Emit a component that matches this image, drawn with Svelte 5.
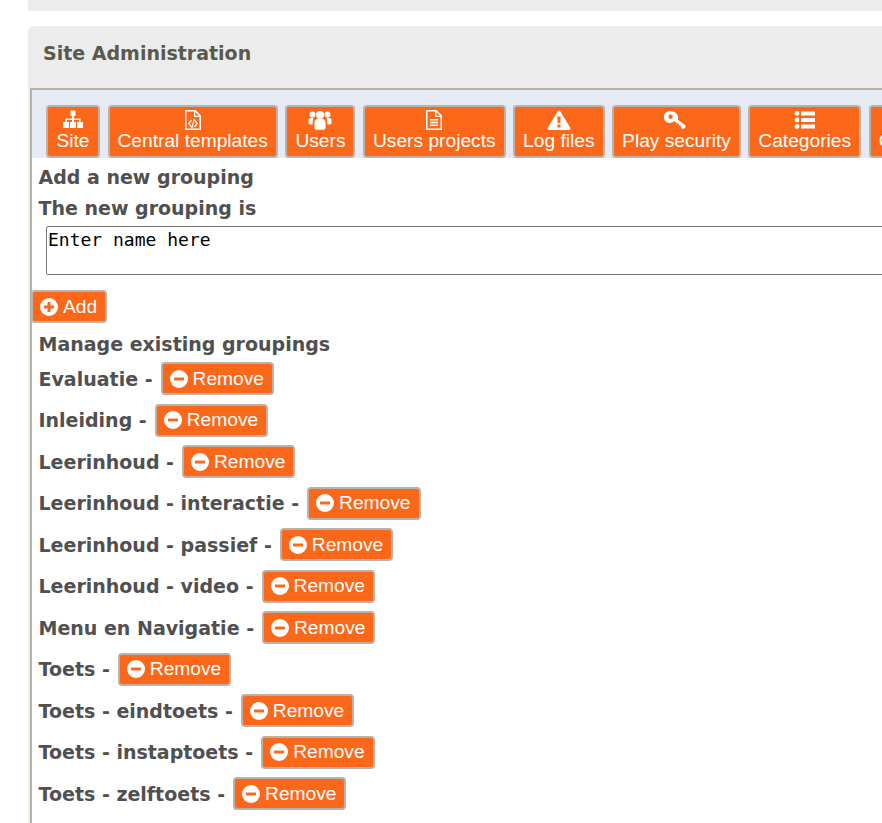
<script>
  const tabs = [
    { label: 'Site', icon: 'sitemap' },
    { label: 'Central templates', icon: 'code' },
    { label: 'Users', icon: 'users' },
    { label: 'Users projects', icon: 'file' },
    { label: 'Log files', icon: 'warning' },
    { label: 'Play security', icon: 'key' },
    { label: 'Categories', icon: 'list' },
    { label: 'Groupings', icon: 'list' }
  ];

  const groupings = [
    'Evaluatie',
    'Inleiding',
    'Leerinhoud',
    'Leerinhoud - interactie',
    'Leerinhoud - passief',
    'Leerinhoud - video',
    'Menu en Navigatie',
    'Toets',
    'Toets - eindtoets',
    'Toets - instaptoets',
    'Toets - zelftoets'
  ];
</script>

<div class="page">
  <div class="topbar"></div>

  <section class="panel">
    <h2 class="panel-title">Site Administration</h2>

    <div class="panel-body">
      <nav class="tabs">
        {#each tabs as tab}
          <button class="btn tab">
            <svg class="tab-icon" viewBox="0 0 24 20" fill="#fff">
              {#if tab.icon === 'sitemap'}
                <path d="M9.500 0.500h5v5.500h-1.500v2.500h6.500V12h2.500v6h-6v-6h2v-2h-5v2h2v6h-6v-6h2v-2h-5v2h2v6h-6v-6h2.500V8.500H11V6H9.500z" />
              {:else if tab.icon === 'code'}
                <path fill-rule="evenodd" d="M4 0h10.500L20 5.500V20H4zM5.500 1.500v17h13V7h-5.500V1.500zM14.300 2v3.700H18z" />
                <path d="M10 9.500l1 1-2.300 3 2.300 3-1 1-3-4zM14 9.500l3 4-3 4-1-1 2.300-3-2.300-3zM12.500 8.800l1.100.2-2.100 9.500-1.100-.2z" />
              {:else if tab.icon === 'users'}
                <circle cx="12" cy="5" r="4" />
                <circle cx="4.500" cy="4.500" r="3" />
                <circle cx="19.500" cy="4.500" r="3" />
                <path d="M6.500 12.500c0-2.300 1.500-3.500 3-3.500h5c1.500 0 3 1.200 3 3.500V17.500c0 1.300-1 2.300-2.300 2.300H8.800c-1.300 0-2.300-1-2.300-2.300z" />
                <path d="M0.500 10c0-1.200 1-2 2.200-2h3.100c-.8.900-1.100 2.300-1.100 3.800v2.700H2.200C1.200 14.500.5 13.800.5 12.800zM23.500 10c0-1.200-1-2-2.200-2h-3.100c.8.900 1.100 2.300 1.100 3.800v2.700h2.500c1 0 1.700-.7 1.700-1.700z" />
              {:else if tab.icon === 'file'}
                <path fill-rule="evenodd" d="M4 0h10.500L20 5.500V20H4zM5.500 1.500v17h13V7h-5.500V1.500zM14.300 2v3.700H18z" />
                <path d="M8 9h8v1.500H8zM8 11.700h8v1.500H8zM8 14.400h8v1.500H8z" />
              {:else if tab.icon === 'warning'}
                <path fill-rule="evenodd" d="M12 0.500c.6 0 1.100.3 1.400.9l9.800 16.400c.6 1-.1 2.200-1.200 2.200H2c-1.100 0-1.800-1.200-1.200-2.200L10.600 1.400c.3-.6.800-.9 1.400-.9zM10.300 6.500l.4 6.500h2.600l.4-6.500zM10.500 14.500v3h3v-3z" />
              {:else if tab.icon === 'key'}
                <path fill-rule="evenodd" d="M8 1.500a6 6 0 0 1 5.700 7.900l7.800 6.100v1.800l-1.800 1.500h-1.400l-1.500-1.500.2-1.600-1.800-.2-.2-1.800-1.800-.2-3-2.400A6 6 0 1 1 8 1.500zM6.500 4.500a2.200 2.200 0 1 0 0 4.400 2.200 2.200 0 0 0 0-4.400z" />
              {:else}
                <circle cx="4" cy="3.500" r="2.400" />
                <circle cx="4" cy="10" r="2.400" />
                <circle cx="4" cy="16.500" r="2.400" />
                <path d="M8 1.500h14v4H8zM8 8h14v4H8zM8 14.500h14v4H8z" />
              {/if}
            </svg>
            <span>{tab.label}</span>
          </button>
        {/each}
      </nav>

      <div class="content">
        <div class="label first">Add a new grouping</div>
        <div class="label second">The new grouping is</div>
        <textarea class="name-input" value="Enter name here"></textarea>

        <button class="btn inline add">
          <svg class="round-icon" viewBox="0 0 16 16">
            <circle cx="8" cy="8" r="8" fill="#fff" />
            <path d="M6.700 3.500h2.600v3.200h3.200v2.600H9.300v3.200H6.700V9.300H3.500V6.700h3.200z" fill="#fb6819" />
          </svg>
          Add
        </button>

        <div class="label manage">Manage existing groupings</div>

        <ul class="groupings">
          {#each groupings as name}
            <li>
              <span class="label">{name} -</span>
              <button class="btn inline">
                <svg class="round-icon" viewBox="0 0 16 16">
                  <circle cx="8" cy="8" r="8" fill="#fff" />
                  <rect x="3.500" y="6.700" width="9" height="2.600" fill="#fb6819" />
                </svg>
                Remove
              </button>
            </li>
          {/each}
        </ul>
      </div>
    </div>
  </section>
</div>

<style>
  :global(body) {
    background: #fff;
    overflow: hidden;
  }

  .page {
    height: 823px;
    width: 1200px;
    padding-left: 28px;
    overflow: hidden;
    box-sizing: border-box;
  }

  .topbar {
    height: 11px;
    background: #ececec;
  }

  .panel {
    margin-top: 15px;
    background: #ececec;
    border-top-left-radius: 6px;
  }

  .panel-title {
    margin: 0;
    height: 62px;
    padding-left: 15px;
    font: bold 19px/55px "DejaVu Sans", sans-serif;
    color: #5a5a4c;
  }

  .panel-body {
    margin-left: 2px;
    border-left: 2px solid #b8b1a5;
    border-top: 2px solid #b8b1a5;
    background: #fff;
  }

  .tabs {
    display: flex;
    gap: 7.500px;
    padding: 15px 0 0 14px;
    background: #e6ebf3;
    height: 53px;
  }

  .btn {
    background: #fb6819;
    border: 2px solid #bcb1a8;
    border-radius: 4px;
    color: #fff;
    font-family: "Liberation Sans", Arial, sans-serif;
    font-size: 19.200px;
    box-sizing: border-box;
    margin: 0;
  }

  .tab {
    display: flex;
    flex-direction: column;
    align-items: center;
    flex: none;
    min-width: 54px;
    height: 53px;
    padding: 3px 8px 0;
    line-height: 22px;
    white-space: nowrap;
  }

  .tab-icon {
    width: 24px;
    height: 20px;
  }

  .content {
    height: 700px;
  }

  .label {
    font: bold 19px/24px "DejaVu Sans", sans-serif;
    color: #505050;
  }

  .first {
    padding: 7px 0 0 6.500px;
  }

  .second {
    padding: 7px 0 0 6.500px;
  }

  .name-input {
    display: block;
    margin: 6px 0 0 14px;
    width: 1000px;
    height: 49px;
    box-sizing: border-box;
    padding: 2px 1px;
    border: 1px solid #767676;
    border-radius: 2px;
    font: 18px/21px "DejaVu Sans Mono", monospace;
    color: #000;
    resize: none;
  }

  .inline {
    display: inline-flex;
    align-items: center;
    gap: 5px;
    height: 33px;
    padding: 0 8px 0 7px;
    line-height: 1;
  }

  .add {
    margin: 15px 0 0 -1px;
    display: flex;
  }

  .round-icon {
    width: 18px;
    height: 18px;
    flex: none;
  }

  .manage {
    padding: 9px 0 0 6.500px;
  }

  .groupings {
    list-style: none;
    margin: 0;
    padding: 6px 0 0 6.500px;
  }

  .groupings li {
    display: flex;
    align-items: center;
    gap: 8px;
    height: 33px;
    margin-bottom: 8.500px;
  }
</style>
